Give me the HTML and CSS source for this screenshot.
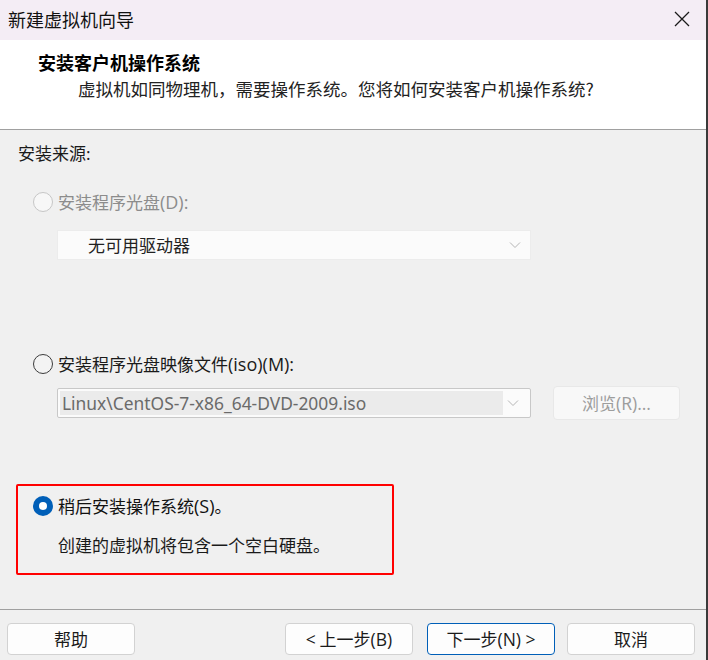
FILE: index.html
```html
<!DOCTYPE html>
<html lang="zh-CN">
<head>
<meta charset="utf-8">
<title>新建虚拟机向导</title>
<link rel="stylesheet" href="styles.css">
</head>
<body>
<div class="window">
  <div class="titlebar">
    <span class="title">新建虚拟机向导</span>
    <svg class="close" width="16" height="16" viewBox="0 0 16 16"><path d="M1 1 L15 15 M15 1 L1 15" stroke="#1a1a1a" stroke-width="1.3" fill="none"/></svg>
  </div>
  <div class="header">
    <div class="heading">安装客户机操作系统</div>
    <div class="subtitle">虚拟机如同物理机，需要操作系统。您将如何安装客户机操作系统?</div>
  </div>
  <div class="main">
    <div class="section-label">安装来源:</div>

    <div class="option disabled">
      <span class="radio radio-disabled"></span>
      <span class="opt-label">安装程序光盘<span class="lat">(D):</span></span>
    </div>
    <div class="combo combo-disabled">
      <span class="combo-text">无可用驱动器</span>
      <svg class="chev" width="12" height="8" viewBox="0 0 12 8"><path d="M1 1.5 L6 6.5 L11 1.5" stroke="#b5b5b5" stroke-width="1" fill="none"/></svg>
    </div>

    <div class="option option-iso">
      <span class="radio"></span>
      <span class="opt-label">安装程序光盘映像文件<span class="lat">(iso)(M):</span></span>
    </div>
    <div class="iso-row">
      <div class="combo combo-iso">
        <span class="combo-field">Linux\CentOS-7-x86_64-DVD-2009.iso</span>
        <svg class="chev" width="12" height="8" viewBox="0 0 12 8"><path d="M1 1.5 L6 6.5 L11 1.5" stroke="#b5b5b5" stroke-width="1" fill="none"/></svg>
      </div>
      <button class="btn btn-browse">浏览<span class="lat">(R)...</span></button>
    </div>

    <div class="highlight">
      <div class="option">
        <span class="radio radio-checked"></span>
        <span class="opt-label dark">稍后安装操作系统<span class="lat">(S)</span>。</span>
      </div>
      <div class="note">创建的虚拟机将包含一个空白硬盘。</div>
    </div>
  </div>
  <div class="footer">
    <button class="btn">帮助</button>
    <div class="spacer"></div>
    <button class="btn"><span class="lat">&lt;</span> 上一步<span class="lat">(B)</span></button>
    <button class="btn btn-default">下一步<span class="lat">(N) &gt;</span></button>
    <button class="btn btn-cancel">取消</button>
  </div>
</div>
</body>
</html>
```

FILE: styles.css
```css
* { box-sizing: border-box; }
html, body { margin: 0; padding: 0; }
body {
  font-family: "Noto Sans", "Noto Sans CJK SC", sans-serif;
  font-size: 17px;
  color: #1a1a1a;
  background: #f0f0f0;
}
.lat {
  font-family: "Open Sans", "Noto Sans", sans-serif;
  font-size: 18px;
}
.window {
  width: 708px;
  height: 660px;
  display: flex;
  flex-direction: column;
  border-right: 2px solid #3a3a3a;
  background: #f0f0f0;
  overflow: hidden;
}
.titlebar {
  height: 40px;
  flex: none;
  background: #f4edf5;
  display: flex;
  align-items: center;
  padding-left: 8px;
  padding-right: 16px;
}
.title {
  font-family: "Noto Sans CJK SC", sans-serif;
  font-size: 18px;
  color: #111;
  flex: 1;
  line-height: 24px;
  margin-top: -2px;
}
.close { margin-top: -2px; }
.header {
  height: 90px;
  flex: none;
  background: #fff;
  padding-top: 10px;
  border-bottom: 1px solid #a0a0a0;
}
.heading {
  font-family: "Noto Sans CJK SC", sans-serif;
  font-weight: bold;
  font-size: 18px;
  line-height: 24px;
  padding-left: 38px;
  color: #000;
}
.subtitle {
  font-family: "Noto Sans CJK SC", sans-serif;
  font-size: 17.5px;
  line-height: 24px;
  padding-left: 78px;
  margin-top: 3px;
  color: #222;
}
.main {
  flex: 1;
  padding-left: 18px;
  padding-top: 12px;
  border-bottom: 1px solid #a0a0a0;
}
.section-label {
  line-height: 24px;
  height: 24px;
}
.option {
  display: flex;
  align-items: center;
  height: 24px;
  padding-left: 15px;
  margin-top: 24px;
}
.option-iso { margin-top: 92px; }
.opt-label {
  line-height: 24px;
  margin-left: 5px;
  color: #1a1a1a;
  white-space: nowrap;
}
.disabled .opt-label { color: #8c8c8c; }
.radio {
  width: 20px;
  height: 20px;
  border-radius: 50%;
  border: 1.3px solid #3c3c3c;
  background: #f3f3f3;
  flex: none;
  position: relative;
}
.radio-disabled {
  border-color: #c6c6c6;
  background: #f7f7f7;
}
.radio-checked {
  border: none;
  background: #005fb8;
}
.radio-checked::after {
  content: "";
  position: absolute;
  left: 6px;
  top: 6px;
  width: 8px;
  height: 8px;
  border-radius: 50%;
  background: #fff;
}
.combo {
  margin-left: 39px;
  width: 474px;
  height: 30px;
  display: flex;
  align-items: center;
  position: relative;
}
.combo-disabled {
  margin-top: 16px;
  background: #fbfbfb;
  border: 1px solid #ececec;
  padding-left: 30px;
}
.combo-text {
  font-family: "Noto Sans CJK SC", sans-serif;
  color: #222;
  flex: 1;
  line-height: 24px;
}
.chev { margin-right: 9px; flex: none; }
.iso-row {
  display: flex;
  align-items: center;
  margin-top: 10px;
}
.combo-iso {
  background: #fbfbfb;
  border: 1px solid #c8c8c8;
  border-radius: 2px;
  padding: 2px;
}
.combo-field {
  flex: 1;
  align-self: stretch;
  background: #ebebeb;
  color: #6a6a6a;
  font-size: 17.4px;
  line-height: 24px;
  padding-left: 2px;
  margin-right: 4px;
  white-space: nowrap;
}
.btn {
  font-family: "Noto Sans CJK SC", sans-serif;
  font-size: 17px;
  width: 128px;
  height: 32px;
  border: 1px solid #d2d2d2;
  border-radius: 4px;
  background: #fdfdfd;
  color: #1a1a1a;
  padding: 0;
  line-height: 28px;
  white-space: nowrap;
}
.btn .lat { font-size: 17.5px; }
.btn-browse {
  margin-left: 22px;
  width: 127px;
  height: 34px;
  background: #f8f8f8;
  border-color: #e8e8e8;
  color: #9d9d9d;
}
.highlight {
  margin-top: 64px;
  margin-left: -2px;
  width: 378px;
  height: 91px;
  border: 2px solid #ff0000;
  border-radius: 2px;
  padding-top: 8px;
}
.highlight .option { margin-top: 0; padding-left: 15px; }
.opt-label.dark { color: #111; }
.note {
  margin-top: 16px;
  padding-left: 40px;
  line-height: 24px;
  color: #1a1a1a;
}
.footer {
  height: 50px;
  flex: none;
  display: flex;
  align-items: flex-start;
  padding-top: 13px;
  padding-left: 7px;
  padding-right: 11px;
}
.spacer { flex: 1; }
.btn-default {
  margin-left: 14px;
  border-color: #005fb8;
}
.btn-cancel { margin-left: 12px; }
```
